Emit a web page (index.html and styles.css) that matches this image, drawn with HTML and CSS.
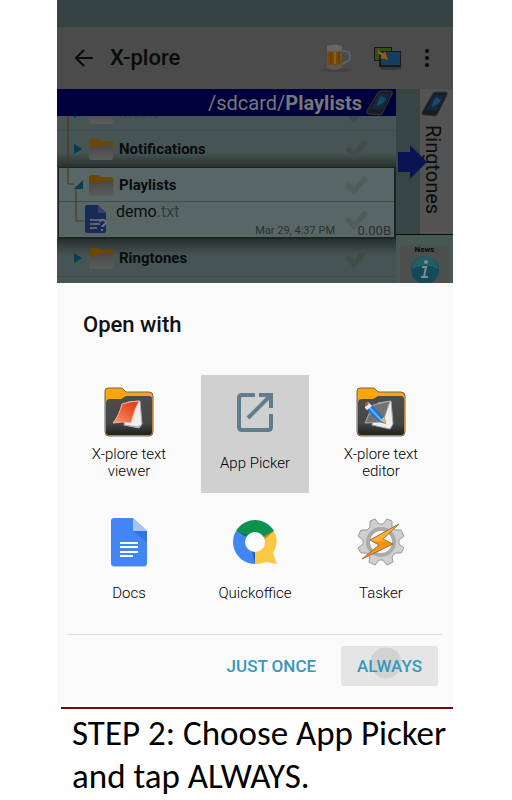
FILE: index.html
```html
<!DOCTYPE html>
<html lang="en">
  <head>
    <meta charset="UTF-8" />
    <title>Open with App Picker</title>
    <link rel="stylesheet" href="styles.css">
  </head>
  <body>
    <!-- shared drawings -->
    <svg width="0" height="0" class="defs" aria-hidden="true">
      <defs>
        <linearGradient id="paper" x1="0" y1="0" x2="0" y2="1">
          <stop offset="0" stop-color="#484848" /><stop offset="1" stop-color="#5c5c5c" />
        </linearGradient>
        <linearGradient id="dark" x1="0" y1="0" x2="0" y2="1">
          <stop offset="0" stop-color="#4d4d4d" /><stop offset=".7" stop-color="#464646" /><stop offset="1" stop-color="#202020" />
        </linearGradient>
        <linearGradient id="red" x1="0" y1="1" x2="1" y2="0">
          <stop offset="0" stop-color="#fa9873" /><stop offset=".6" stop-color="#e9552c" /><stop offset="1" stop-color="#d83b18" />
        </linearGradient>
        <linearGradient id="bolt" x1="0" y1="0" x2="0" y2="1">
          <stop offset="0" stop-color="#ffb33a" /><stop offset=".48" stop-color="#ffae35" /><stop offset=".52" stop-color="#ff8d0b" /><stop offset="1" stop-color="#ff9719" />
        </linearGradient>
        <symbol id="folder" viewBox="0 0 26 22">
          <path d="M1 4Q1 1 4 1h6q2 0 3 2h9q3 0 3 3v10H1z" fill="#6b4700" />
          <path d="M1 12q0-3 3-3h6q2 0 3-2h9q3 0 3 3v9q0 3-3 3H4q-3 0-3-3z" fill="url(#paper)" />
        </symbol>
        <symbol id="check" viewBox="0 0 24 20">
          <path d="M1 11l4-4 5 5L20 1l4 3-14 16z" fill="currentColor" />
        </symbol>
        <symbol id="phone" viewBox="0 0 28 26">
          <path d="M11 4q1-3 4-3l10 0q2 0 1 3l-9 18q-1 3-3 3L3 24q-3 0-2-3z" fill="#1a1c1d" stroke="#34383a" />
          <path d="M13 4h11l-8 15H5z" fill="#112a42" />
          <path d="M15 6l5 3-3 4-6 3 1-5z" fill="#1c4a66" />
        </symbol>
        <symbol id="dark-folder" viewBox="0 0 50 50">
          <path d="M1 4q0-3 3-3h13q2 0 3 2l2 2h23q4 0 4 4v36q0 4-4 4H5q-4 0-4-4z" fill="#ffa50b" stroke="#666" />
          <path d="M2 16q0-4 4-4h11l5-3h23q3 0 3 3v33q0 3-3 3H5q-3 0-3-3z" fill="url(#dark)" />
        </symbol>
      </defs>
    </svg>

    <main class="page">
      <section class="app">
        <div class="status-bar"></div>
        <header class="toolbar">
          <button class="tool" aria-label="Back">
            <svg width="18" height="18" viewBox="0 0 18 18"><path d="M9 1L1 9l8 8M1 9h17" fill="none" stroke="#0b0b0b" stroke-width="2" /></svg>
          </button>
          <h1>X-plore</h1>
          <button class="tool" aria-label="Donate">
            <svg width="30" height="28" viewBox="0 0 30 28">
              <ellipse cx="15" cy="26" rx="15" ry="2" fill="#424242" />
              <path d="M20 7h3q5 0 5 5t-4 6l-4 2" fill="none" stroke="#5f5f5f" stroke-width="2" />
              <path d="M5 2q8-3 15 0v22q-8 4-15 0z" fill="#565656" />
              <path d="M6 6h13v15H6z" fill="#744a0c" />
              <path d="M9 8v12M17 8v12" stroke="#5d3709" />
              <path d="M13 8v12" stroke="#8b5d18" stroke-width="2" />
              <path d="M5 2q8-3 15 0v5q-8 1-15 0z" fill="#676767" />
            </svg>
          </button>
          <button class="tool" aria-label="Switch panes">
            <svg width="28" height="24" viewBox="0 0 28 24">
              <ellipse cx="17" cy="22" rx="11" ry="2" fill="#373737" />
              <path d="M0 1h18v14H0z" fill="#171919" /><path d="M1 2h16v12H1z" fill="#34501a" />
              <path d="M5 5h22v16H5z" fill="#171a1b" /><path d="M7 6h19v13H7z" fill="#143f61" />
              <path d="M4 3q3 5 6 4l1-2 3 9-8-2 2-2Q3 8 4 3z" fill="#935c12" />
            </svg>
          </button>
          <button class="tool" aria-label="More">
            <svg width="6" height="18" viewBox="0 0 6 18" fill="#080808"><circle cx="3" cy="2" r="2" /><circle cx="3" cy="9" r="2" /><circle cx="3" cy="16" r="2" /></svg>
          </button>
        </header>

        <div class="panes">
          <div class="pane">
            <div class="path">
              <span>/sdcard/<b>Playlists</b></span>
              <svg width="28" height="26"><use href="#phone" /></svg>
            </div>
            <div class="tree">
              <div class="row row-cut-top">
                <span class="arrow"></span>
                <svg width="26" height="22"><use href="#folder" /></svg>
                <b class="faded">Music</b>
                <svg class="check" width="24" height="20"><use href="#check" /></svg>
              </div>
              <div class="row shade-bottom">
                <span class="arrow"></span>
                <svg width="26" height="22"><use href="#folder" /></svg>
                <b>Notifications</b>
                <svg class="check" width="24" height="20"><use href="#check" /></svg>
              </div>
              <div class="open-folder">
                <div class="row">
                  <span class="arrow arrow-open"></span>
                  <svg width="26" height="22"><use href="#folder" /></svg>
                  <b>Playlists</b>
                  <svg class="check" width="24" height="20"><use href="#check" /></svg>
                </div>
                <div class="row file">
                  <svg width="23" height="29" viewBox="0 0 23 29">
                    <path d="M0 2q0-2 2-2h11l8 8v18q0 2-2 2H2q-2 0-2-2z" fill="#182b58" />
                    <path d="M13 0l8 8h-8z" fill="#354264" />
                    <path d="M5 15h11M5 19h10M5 23h7" stroke="#606570" stroke-width="2" />
                    <path d="M15 17q1-3 4-2 4 2 0 5-2 1-2 2M17 24v2" fill="none" stroke="#69727a" stroke-width="2" />
                  </svg>
                  <span class="file-name">demo<i>.txt</i></span>
                  <span class="date">Mar 29, 4:37 PM</span>
                  <span class="size">0.00B</span>
                  <svg class="check" width="24" height="20"><use href="#check" /></svg>
                </div>
              </div>
              <div class="row row-after shade-top">
                <span class="arrow"></span>
                <svg width="26" height="22"><use href="#folder" /></svg>
                <b>Ringtones</b>
                <svg class="check" width="24" height="20"><use href="#check" /></svg>
              </div>
              <div class="row row-cut-bottom">
                <span class="arrow arrow-none"></span>
                <svg width="26" height="22"><use href="#folder" /></svg>
              </div>
              <svg class="branches" width="40" height="110" viewBox="0 0 40 110" fill="none" stroke="#4a3218"><path d="M11 0v68h6M19 70v35h8" /></svg>
            </div>
          </div>
          <aside class="side">
            <div class="tab">
              <svg width="28" height="26"><use href="#phone" /></svg>
              <span>Ringtones</span>
            </div>
            <svg class="pointer" width="30" height="34" viewBox="0 0 30 34"><path d="M0 7h12V0l17 17-17 17v-7H0z" fill="#0b1452" /></svg>
            <div class="news">
              <div class="news-card">
                <span>News</span>
                <svg width="30" height="30" viewBox="0 0 30 30">
                  <circle cx="15" cy="15" r="14" fill="#124b57" /><path d="M2 14a13 13 0 0 1 26 0q-13-7-26 0z" fill="#245c66" />
                  <circle cx="16" cy="7" r="2" fill="#808b8d" />
                  <path d="M12 12h4l-2 10h4M11 22h3" fill="none" stroke="#808b8d" stroke-width="2" />
                </svg>
              </div>
            </div>
          </aside>
        </div>
      </section>

      <section class="dialog">
        <h2>Open with</h2>
        <div class="choices">
          <button class="choice">
            <svg width="50" height="50" viewBox="0 0 50 50">
              <use href="#dark-folder" />
              <path d="M24 15l12-1 2 23-3 4-15-3z" fill="#eee" stroke="#aaa" />
              <path d="M20 38l14 2 2-2" fill="none" stroke="#aaa" />
              <path d="M18 17q9-3 17-3-5 9-8 22-8-2-18 0 6-7 9-19z" fill="url(#red)" stroke="#f8b49f" />
            </svg>
            <span>X-plore text viewer</span>
          </button>
          <button class="choice chosen">
            <svg width="50" height="50" viewBox="0 0 50 50" fill="none" stroke="#607d8b" stroke-width="4">
              <path d="M25 8H12q-3 0-3 3v29q0 3 3 3h26q3 0 3-3V27M29 8h12v13M40 9L18 31" />
            </svg>
            <span>App Picker</span>
          </button>
          <button class="choice">
            <svg width="50" height="50" viewBox="0 0 50 50">
              <use href="#dark-folder" />
              <path d="M22 16l13-2 2 23-3 5-18-4z" fill="#eee" stroke="#aaa" />
              <path d="M17 18l17-4-7 21-18 1z" fill="#737373" stroke="#aaa" />
              <path d="M9 17l5-1 15 16 1 5-6-2-15-14z" fill="#1774d8" />
              <path d="M12 19l14 15" stroke="#60b2fa" stroke-width="2" />
              <path d="M9 17l3-2 4 4-5 4-2-2z" fill="#eee" /><path d="M9 17l2-2 2 2-4 3z" fill="#dc4232" />
              <path d="M24 33l4-3 2 7z" fill="#f3af65" />
            </svg>
            <span>X-plore text editor</span>
          </button>
          <button class="choice">
            <svg width="50" height="50" viewBox="0 0 50 50">
              <path d="M7 5q0-3 3-3h20l13 13v32q0 3-3 3H10q-3 0-3-3z" fill="#bbc4d4" />
              <path d="M7 4q0-3 3-3h19l14 13v32q0 3-3 3H10q-3 0-3-3z" fill="#4285f4" />
              <path d="M30 14h13v12z" fill="#3972db" /><path d="M29 1l14 13H29z" fill="#a6c5fa" />
              <path d="M16 26h18M16 30h18M16 35h18M16 39h13" stroke="#fff" stroke-width="2" />
            </svg>
            <span>Docs</span>
          </button>
          <button class="choice">
            <svg width="50" height="50" viewBox="0 0 50 50">
              <path d="M25 25L6 14a22 22 0 0 1 38 0z" fill="#0b924e" />
              <path d="M25 25L6 14a22 22 0 0 0 19 33z" fill="#4285f4" />
              <path d="M25 25l19-11q6 11-1 22l4 11-11-2q-5 2-11 2z" fill="#fbc844" />
              <path d="M6 14l11 4-1 2zM22 34l3 2v11z" fill="#174b78" opacity=".6" /><path d="M44 14l-11 4 2 4z" fill="#806c25" opacity=".6" />
              <circle cx="25" cy="25" r="10" fill="#fff" />
            </svg>
            <span>Quickoffice</span>
          </button>
          <button class="choice">
            <svg width="50" height="50" viewBox="0 0 50 50">
              <path d="M14 4l5-2 4 5h4l4-5 5 2 0 6 3 3 6 0 3 6-5 4v4l5 4-3 5-6 0-3 4 1 5-6 3-4-5h-4l-4 5-6-3 1-5-3-4-6 0-3-5 5-4v-4l-5-4 3-6 6 0 3-3z" fill="#cfcfcf" stroke="#999" />
              <circle cx="25" cy="25" r="13" fill="#fafafa" stroke="#aaa" stroke-width="4" />
              <path d="M43 7L14 23l9 5L6 42l31-15-10-5z" fill="url(#bolt)" stroke="#96713a" />
            </svg>
            <span>Tasker</span>
          </button>
        </div>
        <div class="actions">
          <button>JUST ONCE</button>
          <button class="pressed">ALWAYS</button>
        </div>
      </section>

      <p class="caption">STEP 2: Choose App Picker and tap ALWAYS.</p>
    </main>
  </body>
</html>
```
FILE: styles.css
```css
* {
  box-sizing: border-box;
}
body {
  margin: 0;
  background: #fff;
  font-family: Roboto, sans-serif;
  color: #111;
}
svg {
  display: block;
  flex-shrink: 0;
}
button {
  font-family: inherit;
  border: none;
  background: none;
  padding: 0;
  cursor: pointer;
}
.defs {
  position: absolute;
}
.page {
  padding: 0 59px 0 57px;
}

/* file manager behind the dialog */
.app {
  background: #374644;
  color: #080c0c;
}
.status-bar {
  height: 27px;
  background: #354443;
}
.toolbar {
  height: 62px;
  padding: 0 23px 0 18px;
  display: flex;
  align-items: center;
  gap: 22px;
  background: #4b4b4b;
}
.toolbar h1 {
  flex: 1;
  margin: 0 0 0 -5px;
  font-size: 22px;
  line-height: 26px;
  font-weight: 500;
}
.panes {
  display: flex;
  height: 194px;
  overflow: hidden;
}
.pane {
  flex: 1;
}
.path {
  height: 27px;
  padding-right: 2px;
  display: flex;
  align-items: center;
  justify-content: flex-end;
  gap: 4px;
  background: #00003d;
  color: #777;
  font-size: 20px;
}
.tree {
  position: relative;
  height: 167px;
  overflow: hidden;
  background: #465553;
}
.row {
  height: 36px;
  padding: 0 28px 0 17px;
  display: flex;
  align-items: center;
  gap: 5px;
  border-bottom: 1px solid #3f4d4b;
  font-size: 15px;
}
.row b {
  flex: 1;
  font-weight: 700;
}
.row .faded {
  color: #3b4846;
}
.row-cut-top {
  margin-top: -21px;
}
.shade-bottom {
  background: linear-gradient(#465553 60%, #27302f);
  border-bottom: none;
}
.row-after {
  height: 38px;
}
.shade-top {
  background: linear-gradient(#27302f, #465553 45%);
}
.arrow {
  width: 9px;
  border: 5px solid transparent;
  border-left: 8px solid #083c50;
  border-right: none;
}
.arrow-open {
  border: none;
  border-left: 9px solid transparent;
  border-bottom: 9px solid #083c50;
}
.arrow-none {
  border-color: transparent;
}
.check {
  color: #3f4c4a;
}
.open-folder {
  margin-left: 1px;
  border: 1px solid #182523;
  border-width: 1px 2px 2px 1px;
  background: #586765;
}
.open-folder .row {
  height: 34px;
  padding: 0 26px 0 15px;
}
.open-folder .check {
  color: #4f5d5b;
}
.open-folder .file {
  position: relative;
  height: 35px;
  padding-left: 26px;
  gap: 8px;
  border-bottom: none;
}
.file-name {
  flex: 1;
  align-self: flex-start;
  font-size: 16px;
  line-height: 20px;
}
.file-name i {
  font-style: normal;
  color: #343d3c;
}
.date,
.size {
  position: absolute;
  right: 59px;
  bottom: 0;
  font-size: 11px;
  line-height: 12px;
  color: #293130;
}
.size {
  right: 3px;
  font-size: 13px;
}
.branches {
  position: absolute;
  top: 0;
  left: 0;
}

.side {
  position: relative;
  width: 57px;
}
.tab {
  height: 145px;
  margin-left: 24px;
  display: flex;
  flex-direction: column;
  align-items: flex-start;
  gap: 8px;
  padding: 2px 0 0 1px;
  background: #535353;
}
.tab span {
  writing-mode: vertical-rl;
  font-size: 20px;
  line-height: 24px;
}
.pointer {
  position: absolute;
  top: 56px;
  left: 2px;
}
.news {
  height: 49px;
  padding: 10px 4px 0;
  border-top: 1px solid #080b0b;
  background: #485855;
}
.news-card {
  display: flex;
  flex-direction: column;
  align-items: center;
  gap: 1px;
  background: #4b4f4e;
  font-size: 8px;
  line-height: 9px;
  font-weight: 700;
}

/* chooser */
.dialog {
  padding: 28px 11px 18px;
  background: #fafafa;
}
.dialog h2 {
  margin: 0 15px 37px;
  font-size: 22px;
  line-height: 27px;
  font-weight: 500;
}
.choices {
  display: grid;
  grid-template-columns: repeat(3, 1fr);
  gap: 12px 18px;
  padding: 0 7px 11px;
  border-bottom: 1px solid #dcdcdc;
}
.choice {
  height: 118px;
  padding: 12px 12px 10px;
  display: flex;
  flex-direction: column;
  align-items: center;
  gap: 6px;
  font-size: 15px;
  line-height: 17px;
  font-weight: 300;
  color: #000;
}
.choice span {
  flex: 1;
  display: flex;
  align-items: center;
}
.chosen {
  background: #d0d0d0;
}
.actions {
  display: flex;
  justify-content: flex-end;
  gap: 9px;
  padding: 11px 4px 0;
}
.actions button {
  height: 40px;
  padding: 0 16px;
  border-radius: 2px;
  font-size: 17px;
  font-weight: 500;
  color: #3499bb;
}
.actions .pressed {
  background: radial-gradient(circle at 45px 17px, #d2d2d2 15px, #e5e5e5 16px);
}

.caption {
  margin: 3px 0 0 4px;
  padding: 3px 0 0 11px;
  border-top: 2px solid #7b0b0f;
  font-family: Calibri, Carlito, "Open Sans", sans-serif;
  font-size: 35px;
  line-height: 43px;
  color: #000;
}
```
